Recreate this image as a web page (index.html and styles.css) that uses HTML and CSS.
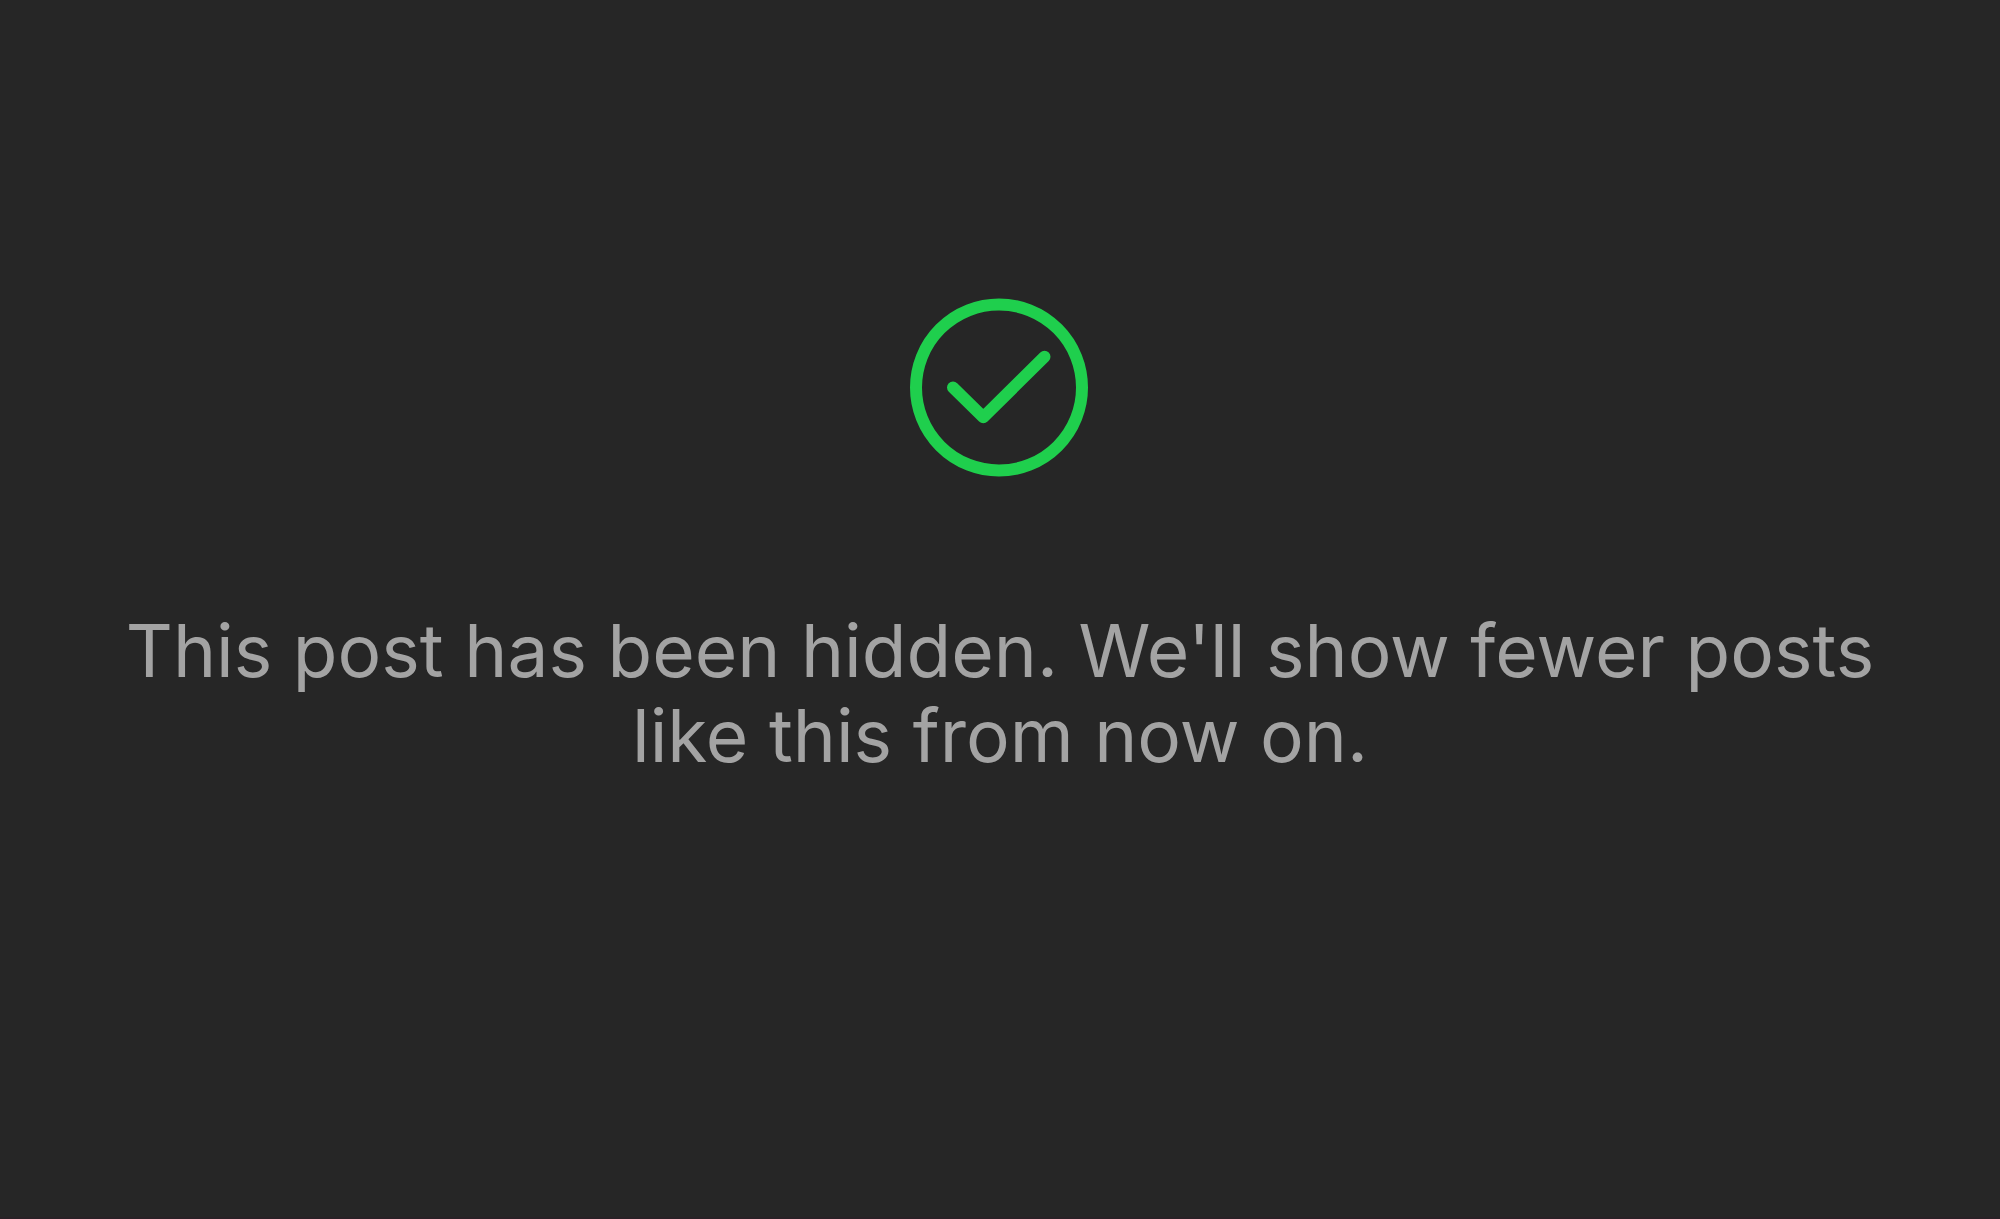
FILE: index.html
```html
<!DOCTYPE html>
<html lang="en">
<head>
    <meta charset="UTF-8">
    <meta name="viewport" content="width=device-width, initial-scale=1">
    <title>Post hidden</title>
    <link rel="stylesheet" href="styles.css">
</head>
<body>
    <main class="notice" role="status">
        <svg class="notice-icon" viewBox="0 0 180 180" aria-hidden="true">
            <circle cx="89" cy="89.5" r="83"/>
            <path d="M43 89.5 L73.3 119.3 L134.5 58.7"/>
        </svg>
        <p class="notice-text">This post has been hidden. We'll show fewer posts like this from now on.</p>
    </main>
</body>
</html>
```

FILE: styles.css
```css
* {
    box-sizing: border-box;
}
body {
    margin: 0;
    min-height: 100vh;
    background-color: #262626;
    font-family: Inter, "Liberation Sans", sans-serif;
}
.notice {
    display: flex;
    flex-direction: column;
    align-items: center;
    min-height: 100vh;
    padding: 298px 120px 120px;
    border-bottom: 2px solid #292126;
}
.notice-icon {
    width: 180px;
    height: 180px;
    fill: none;
    stroke: #1fcf4d;
    stroke-width: 12;
    stroke-linecap: round;
    stroke-linejoin: round;
}
.notice-text {
    margin: 130px 0 0;
    font-size: 73px;
    line-height: 85px;
    text-align: center;
    color: #a3a3a3;
}
```
